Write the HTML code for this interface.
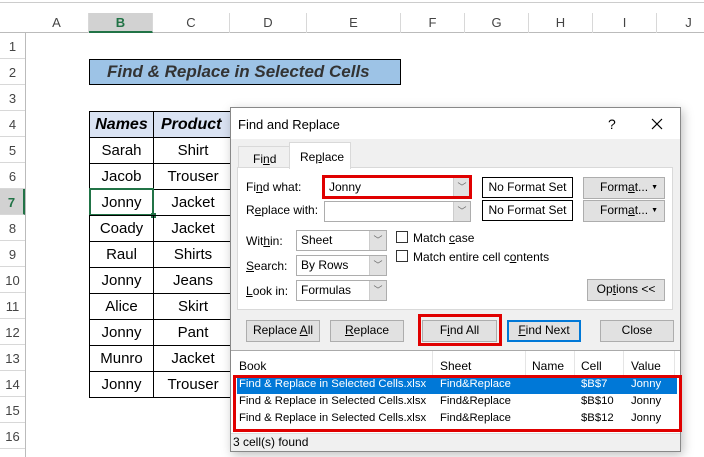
<!DOCTYPE html>
<html><head><meta charset="utf-8"><style>
*{margin:0;padding:0;box-sizing:border-box}
body{width:704px;height:457px;overflow:hidden;background:#fff;font-family:"Liberation Sans",sans-serif;position:relative;font-size:13px;color:#000}
.a{position:absolute}
.ch{position:absolute;top:13px;height:20px;text-align:center;color:#444;font-size:13px;line-height:20px;border-right:1px solid #d8d8d8}
.rh{position:absolute;left:0;width:25px;text-align:center;color:#444;font-size:13px;border-bottom:1px solid #d8d8d8;height:26px;line-height:28px}
.c{position:absolute;border:1px solid #000;text-align:center;font-size:15px;line-height:25px;height:27px}
.d{font-size:12px;position:absolute;white-space:nowrap}
.r{font-size:11.3px}
.btn{position:absolute;background:#e1e1e1;border:1px solid #adadad;text-align:center;font-size:12px;line-height:19px;height:22px;white-space:nowrap}
.cb{position:absolute;background:#fff;border:1px solid #adadad;height:21px;font-size:12px;line-height:19px;padding-left:4px}
.cb i{position:absolute;right:0;top:0;width:17px;height:19px;background:#e1e1e1;border-left:1px solid #ccc;font-style:normal;color:#666;font-size:9px;text-align:center;line-height:19px}
.ar{position:absolute;right:6px;top:0;font-size:7px}
u{text-decoration:underline}
</style></head><body>
<div class="a" style="left:0;top:0;width:704px;height:3px;border-bottom:1px solid #ccc"></div>
<div class="a" style="left:0;top:13px;width:704px;height:20px;border-bottom:1px solid #bbb"></div>
<div class="a" style="left:25px;top:33px;width:1px;height:424px;background:#bbb"></div>
<div class="ch" style="left:25px;width:64px">A</div>
<div class="ch" style="left:89px;width:64px;background:#d2d2d2;color:#217346;font-weight:bold;border-bottom:2px solid #217346">B</div>
<div class="ch" style="left:153px;width:77px">C</div>
<div class="ch" style="left:230px;width:77px">D</div>
<div class="ch" style="left:307px;width:94px">E</div>
<div class="ch" style="left:401px;width:64px">F</div>
<div class="ch" style="left:465px;width:64px">G</div>
<div class="ch" style="left:529px;width:64px">H</div>
<div class="ch" style="left:593px;width:64px">I</div>
<div class="ch" style="left:657px;width:64px">J</div>
<div class="rh" style="top:33px">1</div><div class="rh" style="top:59px">2</div><div class="rh" style="top:85px">3</div><div class="rh" style="top:111px">4</div><div class="rh" style="top:137px">5</div><div class="rh" style="top:163px">6</div><div class="rh" style="top:189px;background:#d2d2d2;color:#217346;font-weight:bold;border-right:2px solid #217346">7</div><div class="rh" style="top:215px">8</div><div class="rh" style="top:241px">9</div><div class="rh" style="top:267px">10</div><div class="rh" style="top:293px">11</div><div class="rh" style="top:319px">12</div><div class="rh" style="top:345px">13</div><div class="rh" style="top:371px">14</div><div class="rh" style="top:397px">15</div><div class="rh" style="top:423px">16</div>
<div class="a" style="left:89px;top:59px;width:312px;height:26px;background:#9dc3e6;border:1px solid #000;font-weight:bold;font-style:italic;font-size:17px;color:#333;line-height:24px;padding-left:17px">Find &amp; Replace in Selected Cells</div>
<div class="c" style="left:89px;top:111px;width:65px;background:#dae3f3;font-weight:bold;font-style:italic;font-size:16px">Names</div>
<div class="c" style="left:153px;top:111px;width:80px;background:#dae3f3;font-weight:bold;font-style:italic;font-size:16px;text-align:left;padding-left:7px">Product</div>
<div class="c" style="left:89px;top:137px;width:65px">Sarah</div><div class="c" style="left:153px;top:137px;width:80px">Shirt</div>
<div class="c" style="left:89px;top:163px;width:65px">Jacob</div><div class="c" style="left:153px;top:163px;width:80px">Trouser</div>
<div class="c" style="left:89px;top:189px;width:65px">Jonny</div><div class="c" style="left:153px;top:189px;width:80px">Jacket</div>
<div class="a" style="left:89px;top:188px;width:65px;height:28px;border:2px solid #217346"></div>
<div class="a" style="left:151px;top:213px;width:5px;height:5px;background:#217346"></div>
<div class="c" style="left:89px;top:215px;width:65px">Coady</div><div class="c" style="left:153px;top:215px;width:80px">Jacket</div>
<div class="c" style="left:89px;top:241px;width:65px">Raul</div><div class="c" style="left:153px;top:241px;width:80px">Shirts</div>
<div class="c" style="left:89px;top:267px;width:65px">Jonny</div><div class="c" style="left:153px;top:267px;width:80px">Jeans</div>
<div class="c" style="left:89px;top:293px;width:65px">Alice</div><div class="c" style="left:153px;top:293px;width:80px">Skirt</div>
<div class="c" style="left:89px;top:319px;width:65px">Jonny</div><div class="c" style="left:153px;top:319px;width:80px">Pant</div>
<div class="c" style="left:89px;top:345px;width:65px">Munro</div><div class="c" style="left:153px;top:345px;width:80px">Jacket</div>
<div class="c" style="left:89px;top:371px;width:65px">Jonny</div><div class="c" style="left:153px;top:371px;width:80px">Trouser</div>

<div class="a" style="left:230px;top:107px;width:451px;height:345px;background:#f0f0f0;border:1px solid #888;box-shadow:2px 3px 10px rgba(0,0,0,.25)">
<div class="a" style="left:0;top:0;width:449px;height:31px;background:#fff"></div>
<div class="d" style="left:7px;top:9px;font-size:13px">Find and Replace</div>
<div class="d" style="left:377px;top:8px;font-size:14px">?</div>
<svg class="a" style="left:420px;top:10px" width="12" height="12"><path d="M1 1L11 11M11 1L1 11" stroke="#000" stroke-width="1.2"/></svg>
<div class="a" style="left:6px;top:59px;width:436px;height:143px;background:#fff;border:1px solid #d9d9d9"></div>
<div class="a" style="left:7px;top:38px;width:52px;height:21px;background:#f0f0f0;border:1px solid #d9d9d9;border-bottom:none"></div>
<div class="d" style="left:22px;top:44px">Fi<u>n</u>d</div>
<div class="a" style="left:58px;top:34px;width:62px;height:27px;background:#fff;border:1px solid #d9d9d9;border-bottom:none"></div>
<div class="d" style="left:69px;top:42px">Re<u>p</u>lace</div>
<div class="d" style="left:15px;top:72px">Fi<u>n</u>d what:</div>
<div class="d" style="left:15px;top:95px">R<u>e</u>place with:</div>
<div class="cb" style="left:93px;top:69px;width:147px">Jonny<i>﹀</i></div>
<div class="a" style="left:91px;top:67px;width:150px;height:24px;border:3px solid #e00000"></div>
<div class="cb" style="left:93px;top:93px;width:147px"><i>﹀</i></div>
<div class="a" style="left:251px;top:69px;width:91px;height:21px;background:#fff;border:1px solid #000;font-size:12px;text-align:center;line-height:19px">No Format Set</div>
<div class="a" style="left:251px;top:92px;width:91px;height:21px;background:#fff;border:1px solid #000;font-size:12px;text-align:center;line-height:19px">No Format Set</div>
<div class="btn" style="left:352px;top:69px;width:82px;text-align:left;padding-left:16px">Form<u>a</u>t...<span class="ar">▼</span></div>
<div class="btn" style="left:352px;top:92px;width:82px;text-align:left;padding-left:16px">Form<u>a</u>t...<span class="ar">▼</span></div>
<div class="d" style="left:15px;top:126px">Wit<u>h</u>in:</div>
<div class="d" style="left:15px;top:151px"><u>S</u>earch:</div>
<div class="d" style="left:15px;top:176px"><u>L</u>ook in:</div>
<div class="cb" style="left:65px;top:122px;width:91px">Sheet<i>﹀</i></div>
<div class="cb" style="left:65px;top:147px;width:91px">By Rows<i>﹀</i></div>
<div class="cb" style="left:65px;top:172px;width:91px">Formulas<i>﹀</i></div>
<div class="a" style="left:165px;top:123px;width:12px;height:12px;background:#fff;border:1px solid #333"></div>
<div class="a" style="left:165px;top:142px;width:12px;height:12px;background:#fff;border:1px solid #333"></div>
<div class="d" style="left:182px;top:123px">Match <u>c</u>ase</div>
<div class="d" style="left:182px;top:142px">Match entire cell c<u>o</u>ntents</div>
<div class="btn" style="left:356px;top:171px;width:78px">Op<u>t</u>ions &lt;&lt;</div>
<div class="btn" style="left:15px;top:212px;width:74px">Replace <u>A</u>ll</div>
<div class="btn" style="left:99px;top:212px;width:74px"><u>R</u>eplace</div>
<div class="btn" style="left:191px;top:212px;width:75px">F<u>i</u>nd All</div>
<div class="a" style="left:187px;top:206px;width:84px;height:32px;border:3px solid #e00000"></div>
<div class="btn" style="left:276px;top:212px;width:74px;border:2px solid #0078d7;line-height:17px"><u>F</u>ind Next</div>
<div class="btn" style="left:369px;top:212px;width:74px">Close</div>
<div class="a" style="left:0;top:242px;width:449px;height:84px;background:#fff;border-top:1px solid #aaa;border-bottom:1px solid #ddd"></div>
<div class="a" style="left:201px;top:243px;width:1px;height:24px;background:#e5e5e5"></div>
<div class="a" style="left:294px;top:243px;width:1px;height:24px;background:#e5e5e5"></div>
<div class="a" style="left:343px;top:243px;width:1px;height:24px;background:#e5e5e5"></div>
<div class="a" style="left:392px;top:243px;width:1px;height:24px;background:#e5e5e5"></div>
<div class="a" style="left:443px;top:243px;width:1px;height:24px;background:#e5e5e5"></div>
<div class="d" style="left:8px;top:251px">Book</div><div class="d" style="left:209px;top:251px">Sheet</div><div class="d" style="left:301px;top:251px">Name</div><div class="d" style="left:350px;top:251px">Cell</div><div class="d" style="left:400px;top:251px">Value</div>
<div class="a" style="left:6px;top:269px;width:440px;height:17px;background:#0078d7"></div>
<div class="d r" style="left:8px;top:270px;color:#fff">Find &amp; Replace in Selected Cells.xlsx</div><div class="d r" style="left:209px;top:270px;color:#fff">Find&amp;Replace</div><div class="d r" style="left:350px;top:270px;color:#fff">$B$7</div><div class="d r" style="left:400px;top:270px;color:#fff">Jonny</div>
<div class="d r" style="left:8px;top:287px">Find &amp; Replace in Selected Cells.xlsx</div><div class="d r" style="left:209px;top:287px">Find&amp;Replace</div><div class="d r" style="left:350px;top:287px">$B$10</div><div class="d r" style="left:400px;top:287px">Jonny</div>
<div class="d r" style="left:8px;top:304px">Find &amp; Replace in Selected Cells.xlsx</div><div class="d r" style="left:209px;top:304px">Find&amp;Replace</div><div class="d r" style="left:350px;top:304px">$B$12</div><div class="d r" style="left:400px;top:304px">Jonny</div>
<div class="a" style="left:2px;top:267px;width:449px;height:57px;border:3px solid #e00000"></div>
<div class="d" style="left:2px;top:327px">3 cell(s) found</div>
</div>
</body></html>
